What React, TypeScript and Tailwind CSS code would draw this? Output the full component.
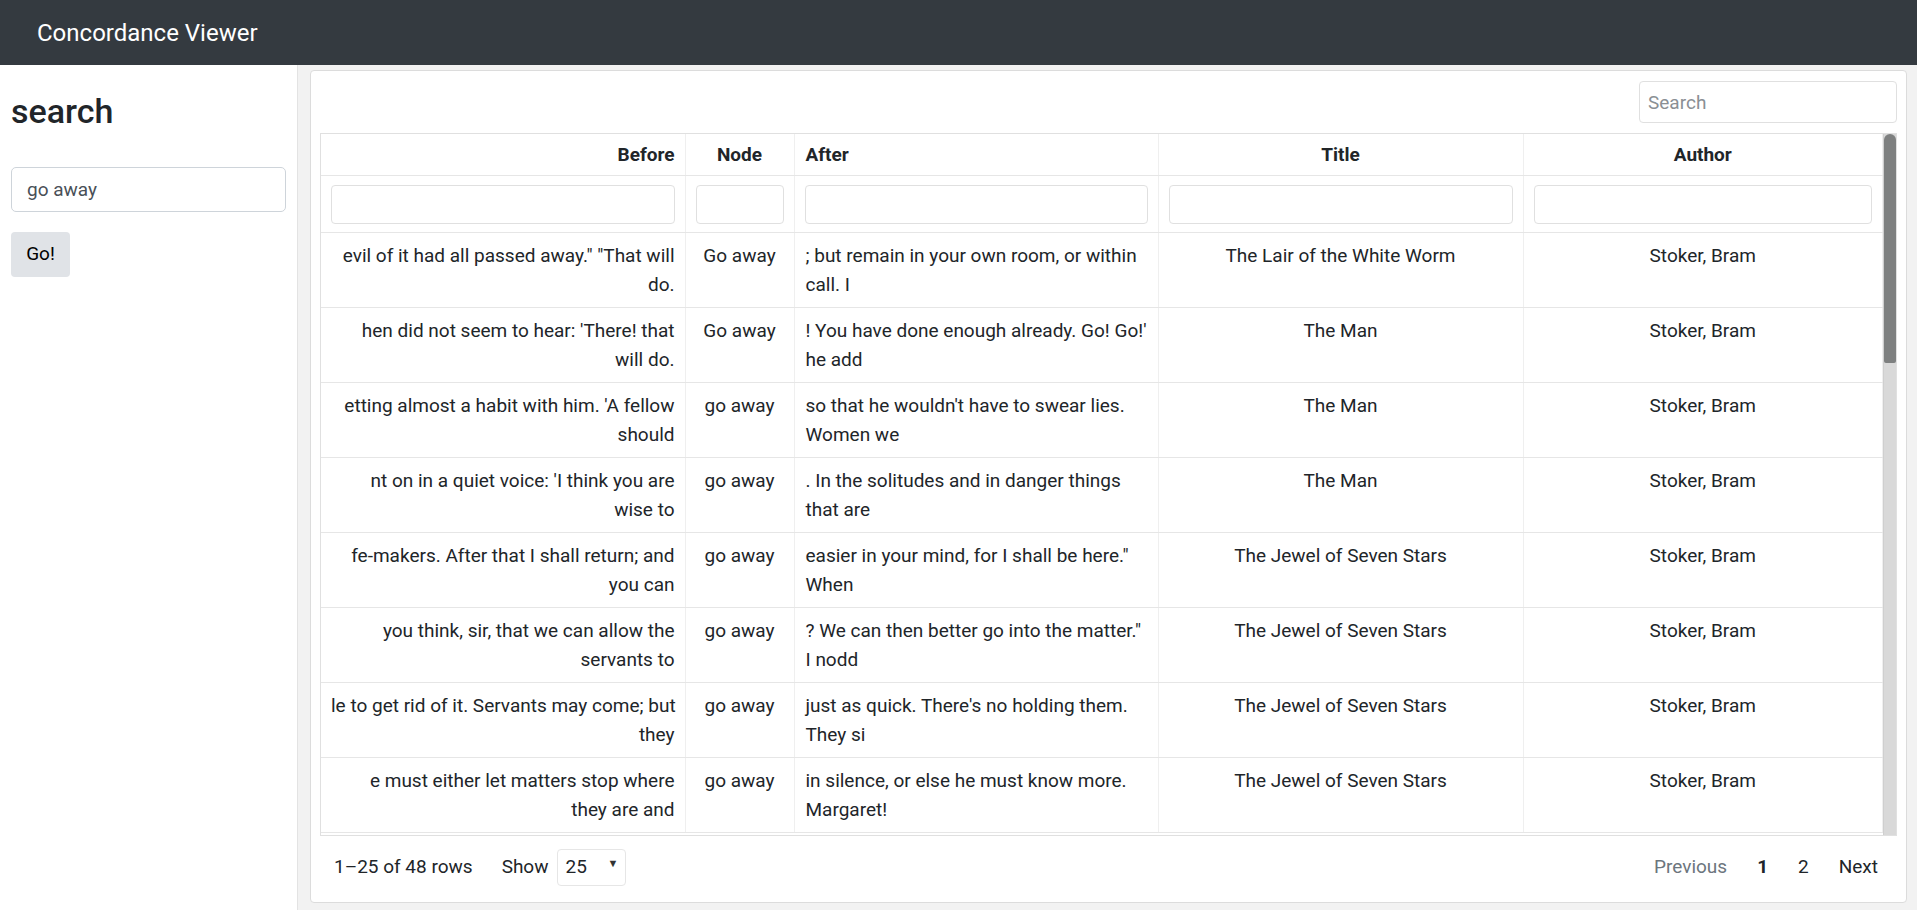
const rows = [
  {
    before: ['evil of it had all passed away." "That will', "do."],
    node: "Go away",
    after: ["; but remain in your own room, or within", "call. I"],
    title: "The Lair of the White Worm",
  },
  {
    before: ["hen did not seem to hear: 'There! that", "will do."],
    node: "Go away",
    after: ["! You have done enough already. Go! Go!'", "he add"],
    title: "The Man",
  },
  {
    before: ["etting almost a habit with him. 'A fellow", "should"],
    node: "go away",
    after: ["so that he wouldn't have to swear lies.", "Women we"],
    title: "The Man",
  },
  {
    before: ["nt on in a quiet voice: 'I think you are", "wise to"],
    node: "go away",
    after: [". In the solitudes and in danger things", "that are"],
    title: "The Man",
  },
  {
    before: ["fe-makers. After that I shall return; and", "you can"],
    node: "go away",
    after: ['easier in your mind, for I shall be here."', "When"],
    title: "The Jewel of Seven Stars",
  },
  {
    before: ["you think, sir, that we can allow the", "servants to"],
    node: "go away",
    after: ['? We can then better go into the matter."', "I nodd"],
    title: "The Jewel of Seven Stars",
  },
  {
    before: ["le to get rid of it. Servants may come; but", "they"],
    node: "go away",
    after: ["just as quick. There's no holding them.", "They si"],
    title: "The Jewel of Seven Stars",
  },
  {
    before: ["e must either let matters stop where", "they are and"],
    node: "go away",
    after: ["in silence, or else he must know more.", "Margaret!"],
    title: "The Jewel of Seven Stars",
  },
];

const cell = "border-r border-b border-r-[#efefef] border-b-[#e6e6e6] align-top";

const Lines = ({ lines }: { lines: string[] }) => (
  <>
    {lines.map((l, i) => (
      <span key={i} className="block whitespace-nowrap">
        {l}
      </span>
    ))}
  </>
);

const App = () => {
  return (
    <div className="h-[910px] flex flex-col font-['Roboto',sans-serif] text-[19px] text-[#212529] overflow-hidden">
      {/* navbar */}
      <nav className="h-[65px] shrink-0 bg-[#343a40] flex items-center pl-[37px]">
        <span className="text-white text-[24px] leading-none">Concordance Viewer</span>
      </nav>

      <div className="flex flex-1 min-h-0">
        {/* sidebar */}
        <aside className="w-[298px] shrink-0 bg-white border-r border-[#e3e3e3] px-[11px] pt-[25px]">
          <h2 className="text-[34px] leading-[42px] font-medium">search</h2>
          <input
            defaultValue="go away"
            className="mt-[35px] w-[275px] h-[45px] border border-[#ced4da] rounded-[5px] px-[15px] text-[19px] text-[#495057] outline-none"
          />
          <button className="mt-[20px] w-[59px] h-[45px] rounded-[4px] bg-[#e0e3e7] text-black text-[19px]">
            Go!
          </button>
        </aside>

        {/* main */}
        <main className="flex-1 bg-[#f2f2f2] pl-[12px] pt-[5px] pr-[10px] pb-[7px] flex">
          <div className="flex-1 bg-white border border-[#dcdcdc] rounded-[4px] px-[9px] pt-[10px] flex flex-col">
            <div className="flex justify-end mb-[10px]">
              <input
                placeholder="Search"
                className="w-[258px] h-[42px] border border-[#e0e0e0] rounded-[4px] px-[8px] text-[19px] placeholder:text-[#8a8f94] outline-none"
              />
            </div>

            {/* table + scrollbar */}
            <div className="h-[703px] border border-[#e0e0e0] flex overflow-hidden">
              <div className="flex-1 overflow-hidden">
                <table className="table-fixed w-full border-collapse">
                  <colgroup>
                    <col className="w-[364px]" />
                    <col className="w-[109px]" />
                    <col className="w-[364px]" />
                    <col className="w-[365px]" />
                    <col />
                  </colgroup>
                  <thead>
                    <tr className="font-bold leading-[27px]">
                      <th className={`${cell} text-right px-[10px] py-[7px]`}>Before</th>
                      <th className={`${cell} text-center px-[10px] py-[7px]`}>Node</th>
                      <th className={`${cell} text-left px-[11px] py-[7px]`}>After</th>
                      <th className={`${cell} text-center px-[10px] py-[7px]`}>Title</th>
                      <th className={`${cell} text-center px-[10px] py-[7px]`}>Author</th>
                    </tr>
                    <tr>
                      {[0, 1, 2, 3, 4].map((i) => (
                        <td key={i} className={`${cell} px-[10px] pt-[9px] pb-[8px]`}>
                          <div className="h-[39px] border border-[#e0e0e0] rounded-[4px]" />
                        </td>
                      ))}
                    </tr>
                  </thead>
                  <tbody className="leading-[29px]">
                    {rows.map((r, i) => (
                      <tr key={i}>
                        <td className={`${cell} text-right px-[10px] py-[8px]`}>
                          <Lines lines={r.before} />
                        </td>
                        <td className={`${cell} text-center px-[8px] py-[8px]`}>{r.node}</td>
                        <td className={`${cell} text-left px-[11px] py-[8px]`}>
                          <Lines lines={r.after} />
                        </td>
                        <td className={`${cell} text-center px-[10px] py-[8px]`}>{r.title}</td>
                        <td className={`${cell} text-center px-[10px] py-[8px]`}>Stoker, Bram</td>
                      </tr>
                    ))}
                  </tbody>
                </table>
              </div>
              {/* fake scrollbar */}
              <div className="w-[13px] shrink-0 bg-[#d9d9d9] border-l border-[#cfcfcf]">
                <div className="h-[229px] bg-[#7e8080] rounded-t-[6px] rounded-b-[2px]" />
              </div>
            </div>

            {/* footer */}
            <div className="h-[62px] flex items-center justify-between pl-[14px] pr-[19px]">
              <div className="flex items-center">
                <span>1–25 of 48 rows</span>
                <span className="ml-[29px]">Show</span>
                <div className="ml-[8px] w-[69px] h-[37px] border border-[#e6e6e6] rounded-[4px] flex items-center justify-between pl-[8px] pr-[6px]">
                  <span>25</span>
                  <span className="text-[11px] text-[#333] -mt-[6px]">▼</span>
                </div>
              </div>
              <div className="flex items-center gap-[30px]">
                <span className="text-[#6c757d]">Previous</span>
                <span className="font-bold">1</span>
                <span>2</span>
                <span>Next</span>
              </div>
            </div>
          </div>
        </main>
      </div>
    </div>
  );
};

export default App;
